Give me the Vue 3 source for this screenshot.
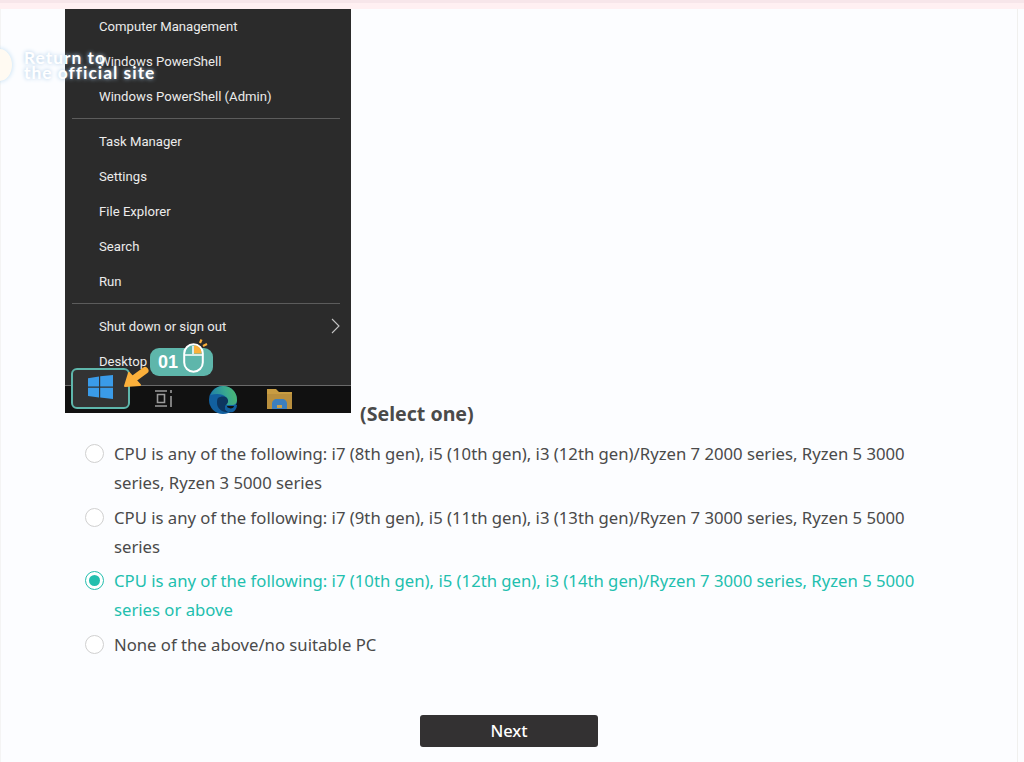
<script setup>
const group1 = ['Computer Management', 'Windows PowerShell', 'Windows PowerShell (Admin)']
const group2 = ['Task Manager', 'Settings', 'File Explorer', 'Search', 'Run']
const options = [
  { id: 1, text: 'CPU is any of the following: i7 (8th gen), i5 (10th gen), i3 (12th gen)/Ryzen 7 2000 series, Ryzen 5 3000 series, Ryzen 3 5000 series' },
  { id: 2, text: 'CPU is any of the following: i7 (9th gen), i5 (11th gen), i3 (13th gen)/Ryzen 7 3000 series, Ryzen 5 5000 series' },
  { id: 3, text: 'CPU is any of the following: i7 (10th gen), i5 (12th gen), i3 (14th gen)/Ryzen 7 3000 series, Ryzen 5 5000 series or above', selected: true },
  { id: 4, text: 'None of the above/no suitable PC' }
]
</script>

<template>
  <div class="page">
    <div class="top-bar"></div>
    <main class="panel">
      <div class="question">
        <div class="shot">
          <ul class="menu">
            <li v-for="item in group1" :key="item">{{ item }}</li>
            <li class="sep"></li>
            <li v-for="item in group2" :key="item">{{ item }}</li>
            <li class="sep"></li>
            <li class="has-arrow">
              Shut down or sign out
              <svg class="chev" width="10" height="16" viewBox="0 0 10 16"><path d="M1 1l7 7-7 7" fill="none" stroke="#c4c4c4" stroke-width="1.1"/></svg>
            </li>
            <li>Desktop</li>
          </ul>
          <div class="taskbar">
            <svg class="tb view" width="18" height="17" viewBox="0 0 18 17"><path d="M0 1h12M0 16h12M2.500 4.500h7v8h-7zM16 0v3M16 6v11" fill="none" stroke="#9a9a9a" stroke-width="1.600"/></svg>
            <svg class="tb edge" width="28" height="28" viewBox="0 0 28 28">
              <defs>
                <linearGradient id="edgeTop" x1="0" y1="0.500" x2="1" y2="0.300">
                  <stop offset="0" stop-color="#1f7fa8"/>
                  <stop offset="0.600" stop-color="#3aa98e"/>
                  <stop offset="1" stop-color="#4cb86f"/>
                </linearGradient>
              </defs>
              <circle cx="14" cy="14" r="14" fill="#12609f"/>
              <path d="M1.500 9C4 3 9 0 14 0c8 0 14 6 14 14 0 3-2 5-5 5h-6c2-2 2-5 0-8-3-3-9-4-15.500-2z" fill="url(#edgeTop)"/>
              <path d="M9 12c3-2 7-2 9 0 2 3 1 5-1 7-2 3-1 6 3 7-6 1-12-3-12-9 0-2 0-4 1-5z" fill="#0c3560"/>
              <path d="M17 19h11c0 3-2 6-4 7-4 1-8-1-8-4 0-1 0-2 1-3z" fill="#12609f"/>
              <path d="M18 20h7c0 2-3 3-5 2-1 0-2-1-2-2z" fill="#111"/>
            </svg>
            <svg class="tb folder" width="25" height="20" viewBox="0 0 25 20">
              <path d="M0 0h9l3 3h13v17H0z" fill="#c89c42"/>
              <rect x="0" y="5" width="25" height="15" fill="#b98f3e"/>
              <path d="M5 20v-5c0-3 2-5 5-5h5c3 0 5 2 5 5v5z" fill="#3c7fbe"/>
              <rect x="10" y="16" width="5" height="3" fill="#c9a04a"/>
            </svg>
          </div>
          <div class="start">
            <svg width="25" height="24" viewBox="0 0 25 24"><path d="M0 3.200l11-1.700v10H0zM12.200 1.300L25 0v11.500H12.200zM0 12.800h11v9.700L0 21zM12.200 12.800H25V24l-12.800-1.400z" fill="#3a9be8"/></svg>
          </div>
          <div class="badge">
            <span>01</span>
            <svg class="mouse" width="28" height="34" viewBox="0 0 28 34">
              <rect x="1.200" y="5.200" width="18.600" height="27.600" rx="9.300" fill="#5eb6ab" stroke="#fff" stroke-width="2"/>
              <path d="M11 6.500c4 0 7.500 2.500 7.500 8H11z" fill="#fbb03b"/>
              <path d="M10 7v8" stroke="#fff" stroke-width="1.500"/>
              <path d="M2 16h17" stroke="#fff" stroke-width="1.500"/>
              <path d="M17 4l1.500-3.500M20 7l4-2" fill="none" stroke="#fbb03b" stroke-width="2.200"/>
            </svg>
          </div>
          <svg class="pointer" width="26" height="22" viewBox="0 0 26 22">
            <path d="M2 20L6 7l11 12z" fill="#fbb03b" stroke="#fbb03b" stroke-width="2" stroke-linejoin="round"/>
            <path d="M9 14L22 4.500" stroke="#fbb03b" stroke-width="7" stroke-linecap="round"/>
          </svg>
        </div>
        <h2 class="title">(Select one)</h2>
      </div>

      <div class="options">
        <label v-for="opt in options" :key="opt.id" class="option" :class="{ selected: opt.selected }">
          <span class="radio"></span>
          <span class="label">{{ opt.text }}</span>
        </label>
      </div>

      <div class="actions">
        <button class="next">Next</button>
      </div>
    </main>

    <div class="return">
      <span class="return-dot"></span>
      <span class="return-text">Return to<br>the official site</span>
    </div>
  </div>
</template>

<style>
html, body { margin: 0; background: #fcfdff; }
</style>

<style scoped>
.page {
  position: relative;
  width: 1024px;
  height: 762px;
  overflow: hidden;
  background: #fcfdff;
  font-family: "Noto Sans", "Open Sans", sans-serif;
  color: #4a4a4a;
}
.top-bar {
  height: 3px;
  background: #f7e6ea;
  border-bottom: 6px solid #fff0f2;
}
.panel {
  height: 753px;
  width: 1018px;
  box-sizing: border-box;
  border-right: 1px solid #f0f0ee;
  border-left: 1px solid #f4f4f4;
}
.question {
  display: flex;
  align-items: flex-end;
  padding-left: 64px;
}
.shot {
  position: relative;
  width: 286px;
  height: 404px;
  background: #2b2b2b;
  flex: none;
}
.menu {
  list-style: none;
  margin: 0;
  padding: 0 0 0 34px;
  color: #ececec;
  font-family: Roboto, sans-serif;
  font-size: 13.150px;
  height: 376px;
  box-sizing: border-box;
}
.menu li {
  height: 35px;
  line-height: 35px;
}
.menu .sep {
  height: 1px;
  margin: 4px 11px 5px -27px;
  background: #5c5c5c;
}
.menu .has-arrow {
  position: relative;
}
.chev {
  position: absolute;
  right: 10px;
  top: 9px;
}
.taskbar {
  height: 27px;
  background: #111;
  border-top: 1px solid #6a6a6a;
  position: relative;
}
.start {
  position: absolute;
  left: 6px;
  top: 359px;
  width: 59px;
  height: 41px;
  box-sizing: border-box;
  border: 2px solid #5eb6ab;
  border-radius: 6px;
  background: #333;
  display: flex;
  align-items: center;
  justify-content: center;
  padding-bottom: 3px;
}
.tb { position: absolute; }
.view { left: 90px; top: 4px; }
.edge { left: 144px; top: 0; }
.folder { left: 202px; top: 3px; }
.badge {
  position: absolute;
  left: 85px;
  top: 339px;
  width: 63px;
  height: 28px;
  background: #5eb6ab;
  border-radius: 9px;
  display: flex;
  align-items: center;
  color: #fff;
  font: 700 18px "Liberation Sans", sans-serif;
  padding-left: 8px;
  box-sizing: border-box;
}
.mouse {
  position: absolute;
  left: 33px;
  top: -9px;
}
.pointer {
  position: absolute;
  left: 58px;
  top: 357px;
}
.title {
  margin: 0 0 -12px 9px;
  font-size: 19.600px;
  font-weight: 700;
  line-height: 22px;
  color: #4a4a4a;
}
.options {
  margin: 26px 0 0 84px;
  width: 834px;
  display: flex;
  flex-direction: column;
  gap: 5.500px;
}
.option {
  display: flex;
  align-items: flex-start;
  font-size: 16.700px;
  line-height: 29px;
  color: #4a4a4a;
}
.option.selected { color: #22bfae; }
.radio {
  flex: none;
  box-sizing: border-box;
  width: 19px;
  height: 19px;
  margin: 5px 10px 0 0;
  border: 1px solid #d0d0d0;
  border-radius: 50%;
  background: #fff;
  position: relative;
}
.selected .radio { border-color: #22bfae; }
.selected .radio::after {
  content: "";
  position: absolute;
  inset: 3px;
  border-radius: 50%;
  background: #22bfae;
}
.actions {
  display: flex;
  justify-content: center;
  margin-top: 56px;
}
.next {
  width: 178px;
  height: 32px;
  background: #333132;
  color: #fff;
  border: 0;
  border-radius: 3px;
  font: 500 16.500px "Noto Sans", sans-serif;
}
.return {
  position: absolute;
  left: -13px;
  top: 49px;
  display: flex;
  align-items: center;
  gap: 12px;
}
.return-dot {
  width: 25px;
  height: 32px;
  border-radius: 50%;
  background: #fffaf2;
  box-shadow: 0 0 5px #bcdcf2;
}
.return-text {
  font: 700 17.400px/15px Lato, sans-serif;
  letter-spacing: 1px;
  color: #fff;
  text-shadow: 0 0 4px #a9c9e6;
}
</style>
